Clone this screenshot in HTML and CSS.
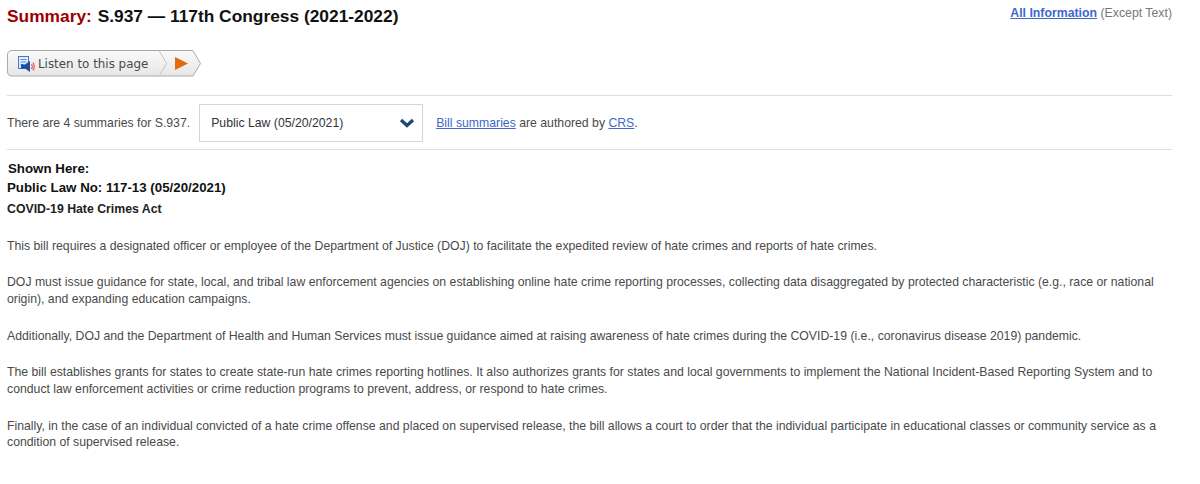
FILE: index.html
```html
<!DOCTYPE html>
<html lang="en">
<head>
<meta charset="utf-8">
<title>Summary: S.937</title>
<link rel="stylesheet" href="styles.css">
</head>
<body>
<main class="page">
  <header class="top">
    <h1 class="title"><span class="label">Summary:</span> S.937 — 117th Congress (2021-2022)</h1>
    <p class="all"><a href="#" class="all-link">All Information</a> (Except Text)</p>
  </header>
  <div class="listen">
    <svg class="btn-bg" width="195" height="27" viewBox="0 0 195 27" aria-hidden="true">
      <defs><linearGradient id="g" x1="0" y1="0" x2="0" y2="1"><stop offset="0" stop-color="#fafafa"/><stop offset="1" stop-color="#e6e6e6"/></linearGradient></defs>
      <path d="M5 .5H186L193.500 13.500L186 26H5Q.5 26 .5 21.500V5Q.5 .5 5 .5Z" fill="url(#g)" stroke="#a9a9a9"/>
      <path d="M152 .5L159.500 13.500L152 26" fill="none" stroke="#c4c4c4"/>
      <path d="M168 7L181 13.500L168 20Z" fill="#e36c0a"/>
    </svg>
    <svg class="speaker" width="18" height="18" viewBox="0 0 18 18" aria-hidden="true">
      <rect x=".5" y="1.500" width="10" height="12" fill="#e3edfb" stroke="#3f78c8"/>
      <path d="M2.500 4.500h6M2.500 7h6M2.500 9.500h3" stroke="#5a8fd6"/>
      <path d="M3 9.500h4l5-3.500v11l-5-3.500H3Z" fill="#1d4f9c"/>
      <path d="M13.500 9q1.500 2.500 0 5M15 7.500q2.500 4 0 8" fill="none" stroke="#e8604c" stroke-width="1.300"/>
    </svg>
    <span class="listen-text">Listen to this page</span>
  </div>
  <div class="selector">
    <span>There are 4 summaries for S.937.</span>
    <div class="select">
      <span>Public Law (05/20/2021)</span>
      <svg width="16" height="10" viewBox="0 0 16 10" aria-hidden="true"><path d="M2 2L8 7.500L14 2" fill="none" stroke="#1b4a72" stroke-width="3.200"/></svg>
    </div>
    <span><a href="#">Bill summaries</a> are authored by <a href="#">CRS</a>.</span>
  </div>
  <section class="body">
    <h2 class="h-shown">Shown Here:</h2>
    <h2 class="h-law">Public Law No: 117-13 (05/20/2021)</h2>
    <p class="act">COVID-19 Hate Crimes Act</p>
    <p>This bill requires a designated officer or employee of the Department of Justice (DOJ) to facilitate the expedited review of hate crimes and reports of hate crimes.</p>
    <p>DOJ must issue guidance for state, local, and tribal law enforcement agencies on establishing online hate crime reporting processes, collecting data disaggregated by protected characteristic (e.g., race or national origin), and expanding education campaigns.</p>
    <p>Additionally, DOJ and the Department of Health and Human Services must issue guidance aimed at raising awareness of hate crimes during the COVID-19 (i.e., coronavirus disease 2019) pandemic.</p>
    <p>The bill establishes grants for states to create state-run hate crimes reporting hotlines. It also authorizes grants for states and local governments to implement the National Incident-Based Reporting System and to conduct law enforcement activities or crime reduction programs to prevent, address, or respond to hate crimes.</p>
    <p>Finally, in the case of an individual convicted of a hate crime offense and placed on supervised release, the bill allows a court to order that the individual participate in educational classes or community service as a condition of supervised release.</p>
  </section>
</main>
</body>
</html>
```
FILE: styles.css
```css
* { box-sizing: border-box; }
html, body { margin: 0; background: #fff; }
body { font-family: "Liberation Sans", Arial, sans-serif; font-size: 12.25px; color: #4a4a4a; }
.page { padding: 0 28px 0 7px; width: 1200px; }
a { color: #4068cc; text-decoration: underline; }
.top { display: flex; justify-content: space-between; align-items: flex-start; padding-top: 5px; }
.title { margin: 0; font-size: 17.35px; line-height: 22px; font-weight: 700; color: #111; }
.label { color: #900; margin-right: 1px; }
.all { margin: 0; padding-top: 1px; font-size: 12.3px; line-height: 14px; color: #777; }
.all-link { font-weight: 700; }
.listen { position: relative; width: 195px; height: 27px; margin-top: 23px; }
.btn-bg { position: absolute; left: 0; top: 0; }
.speaker { position: absolute; left: 11px; top: 5px; }
.listen-text { position: absolute; left: 31px; top: 7px; font-family: "DejaVu Sans", sans-serif; font-size: 11.9px; line-height: 15px; color: #4a4a4a; white-space: nowrap; }
.selector { display: flex; align-items: center; height: 55px; margin-top: 18px; border-top: 1px solid #ddd; border-bottom: 1px solid #ddd; }
.select { display: flex; align-items: center; justify-content: space-between; width: 224px; height: 38px; margin: 0 13px 0 9px; padding: 0 7px 0 11px; border: 1px solid #d5d5d5; color: #333; }
.body { padding-top: 10px; }
.h-shown, .h-law { margin: 0; font-size: 13.3px; line-height: 18px; font-weight: 700; color: #111; }
.h-law { margin-top: 1px; }
.h-shown { padding-left: 1px; }
.body p { margin: 0 0 20px; font-size: 12.25px; line-height: 16.670px; }
.body .act { margin: 4px 0 20px; font-size: 12.3px; font-weight: 700; color: #222; }
```
